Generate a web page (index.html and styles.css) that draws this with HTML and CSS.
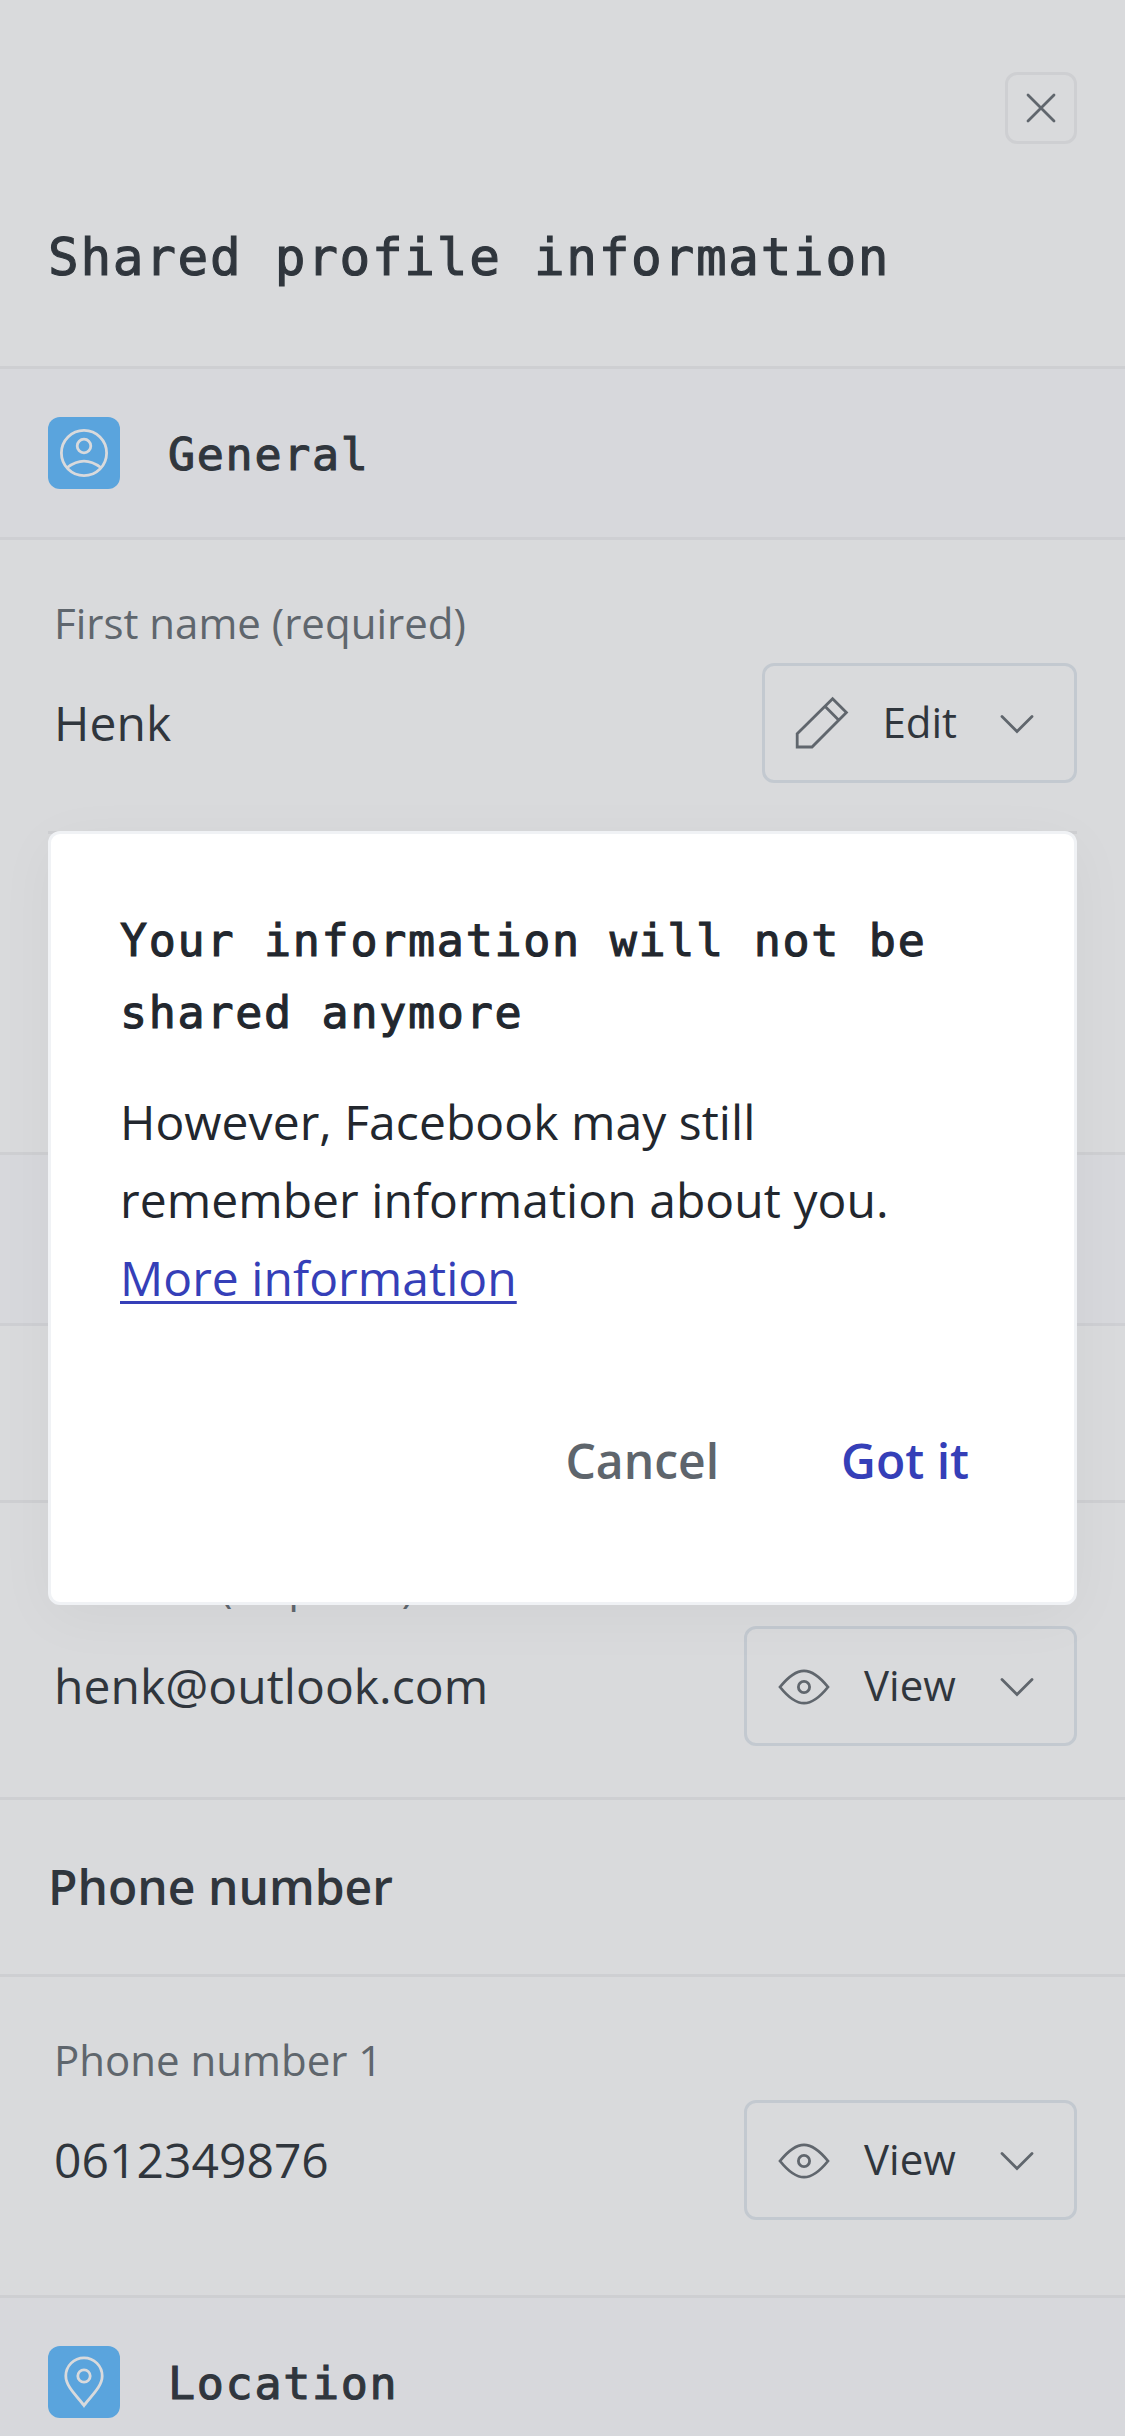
FILE: index.html
```html
<!DOCTYPE html>
<html lang="en">
<head>
<meta charset="utf-8">
<title>Shared profile information</title>
<link rel="stylesheet" href="styles.css">
</head>
<body>
<svg class="defs" width="0" height="0" aria-hidden="true">
  <symbol id="chevron" viewBox="0 0 72 72"><path d="M21 29.5 36 44.5 51 29.5"/></symbol>
  <symbol id="eye" viewBox="0 0 72 72"><path d="M12 37C20 27 28 20.8 36 20.8S52 27 60 37C52 47 44 53.2 36 53.2S20 47 12 37Z"/><circle cx="36" cy="37" r="5.6"/></symbol>
  <symbol id="pencil" viewBox="0 0 72 72"><path d="M11.2 46.7 46.6 11.8 60.4 25.4 26 60H11.2ZM39.2 19.6 52.6 33"/></symbol>
</svg>
<main class="page">
  <header class="top">
    <button class="close" aria-label="Close"><svg viewBox="0 0 66 66"><path d="M20 20 46 46M46 20 20 46"/></svg></button>
    <h1 class="title">Shared profile information</h1>
  </header>

  <div class="section">
    <span class="badge"><svg viewBox="0 0 72 72"><circle cx="36" cy="36" r="22.6"/><circle cx="36" cy="29" r="6.8"/><path d="M19.3 50.5Q36 37.8 52.7 50.5"/></svg></span>
    <h2 class="section-name">General</h2>
  </div>
  <div class="field inset">
    <div class="label">First name (required)</div>
    <div class="line">
      <span class="value">Henk</span>
      <button class="action"><svg><use href="#pencil"/></svg><span>Edit</span><svg><use href="#chevron"/></svg></button>
    </div>
  </div>
  <div class="field covered"></div>

  <div class="section"></div>
  <div class="subsection"></div>
  <div class="field">
    <div class="label">E-mail 1 (required)</div>
    <div class="line">
      <span class="value">henk@outlook.com</span>
      <button class="action view"><svg><use href="#eye"/></svg><span>View</span><svg><use href="#chevron"/></svg></button>
    </div>
  </div>

  <div class="subsection"><h3 class="sub-name">Phone number</h3></div>
  <div class="field last">
    <div class="label">Phone number 1</div>
    <div class="line">
      <span class="value">0612349876</span>
      <button class="action view"><svg><use href="#eye"/></svg><span>View</span><svg><use href="#chevron"/></svg></button>
    </div>
  </div>

  <div class="section">
    <span class="badge"><svg viewBox="0 0 72 72"><path d="M36 59.5C30 51 17.8 41 17.8 30A18.2 18.2 0 0 1 54.2 30C54.2 41 42 51 36 59.5Z"/><circle cx="36" cy="30" r="6.2"/></svg></span>
    <h2 class="section-name">Location</h2>
  </div>
</main>

<div class="dialog" role="dialog">
  <h2 class="dialog-title">Your information will not be shared anymore</h2>
  <p class="dialog-text">However, Facebook may still<br>remember information about you.<br><a class="more">More information</a></p>
  <div class="dialog-actions">
    <button class="cancel">Cancel</button>
    <button class="confirm">Got it</button>
  </div>
</div>
</body>
</html>
```

FILE: styles.css
```css
* { box-sizing: border-box; margin: 0; padding: 0; }
body {
  width: 1125px;
  height: 2436px;
  overflow: hidden;
  position: relative;
  background: #d9dadc;
  color: #30363d;
  font-family: "Open Sans", "Noto Sans", sans-serif;
  font-size: 48px;
  font-kerning: none;
}
button { font: inherit; font-kerning: none; color: inherit; background: none; border: 0; }
svg { fill: none; stroke: #60666d; stroke-width: 2.8; stroke-linecap: round; display: block; }
.defs { position: absolute; }
.page { display: flex; flex-direction: column; height: 2436px; overflow: hidden; }
.page > * { flex: none; }

.top {
  height: 369px;
  padding: 72px 48px 0;
  border-bottom: 3px solid #cecfd2;
}
.close {
  display: block;
  width: 72px;
  height: 72px;
  margin-left: auto;
  border: 3px solid #cecfd2;
  border-radius: 12px;
}
.close svg { width: 66px; height: 66px; }
.title, .section-name, .dialog-title {
  font-family: "DejaVu Sans Mono", monospace;
  font-weight: 400;
  font-size: 45px;
  line-height: 72px;
  letter-spacing: 1.71px;
  -webkit-text-stroke: 1.1px currentColor;
}
.title { margin-top: 75px; font-size: 51px; line-height: 78px; letter-spacing: 1.69px; }

.section {
  height: 171px;
  padding: 48px;
  display: flex;
  gap: 48px;
  background: #d7d8dc;
  border-bottom: 3px solid #cecfd3;
}
.section-name { padding-top: 2px; }
.badge { width: 72px; height: 72px; border-radius: 12px; background: #5aa4dd; }
.badge svg { width: 72px; height: 72px; stroke: #d9dadc; }

.field { padding: 53px 48px 51px 54px; border-bottom: 3px solid #cecfd2; }
.field.inset { padding: 53px 0 48px 6px; margin: 0 48px; }
.field.covered { height: 321px; }
.field.last { padding-bottom: 75px; }
.label { font-size: 42px; line-height: 60px; color: #5f666d; }
.line { display: flex; justify-content: space-between; align-items: center; margin-top: 10px; }
.value { line-height: 72px; letter-spacing: 0.04px; }
.action {
  height: 120px;
  padding: 0 21px;
  display: flex;
  align-items: center;
  gap: 24px;
  font-size: 42px;
  line-height: 60px;
  border: 3px solid #c3c9d0;
  border-radius: 12px;
}
.action.view { width: 333px; }
.action span { flex: 1; padding-bottom: 2px; text-align: left; }
.action svg { flex: none; width: 72px; height: 72px; }

.subsection {
  height: 177px;
  padding: 0 48px;
  display: flex;
  align-items: center;
  border-bottom: 3px solid #cecfd2;
}
.sub-name { font-size: 48px; font-weight: 600; line-height: 72px; }

.dialog {
  position: absolute;
  left: 48px;
  top: 831px;
  width: 1029px;
  height: 774px;
  padding: 71px 69px 0;
  background: #fff;
  border: 3px solid #f0f2f5;
  border-radius: 12px;
  box-shadow: 0 12px 60px rgba(0, 0, 0, 0.04);
  color: #22272e;
}
.dialog-text { margin-top: 34px; line-height: 78px; letter-spacing: 0.05px; }
.more { color: #353fb8; text-decoration: underline; text-decoration-thickness: 2.5px; text-underline-offset: 5px; text-decoration-skip-ink: none; }
.dialog-actions { display: flex; justify-content: flex-end; gap: 122px; margin-top: 108px; padding-right: 36px; font-weight: 600; line-height: 72px; }
.cancel { color: #5e656c; }
.confirm { color: #353fb8; }
```
